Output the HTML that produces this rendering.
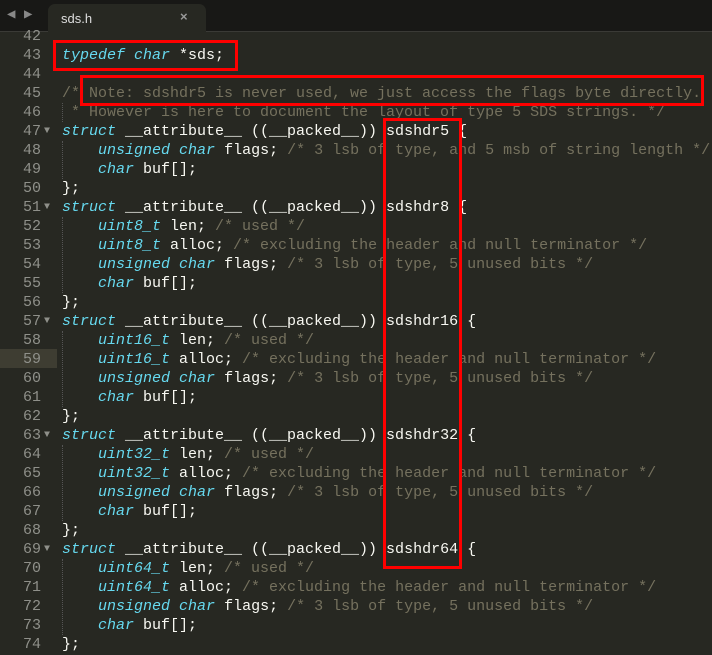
<!DOCTYPE html>
<html><head><meta charset="utf-8"><style>
body{margin:0;width:712px;height:655px;overflow:hidden;background:#272822;font-family:"Liberation Mono",monospace;}
#tabbar{position:absolute;left:0;top:0;width:712px;height:31px;background:#181816;border-bottom:1px solid #3a3a36;}
#tab{position:absolute;left:48px;top:4px;width:158px;height:28px;background:#272822;border-radius:7px 7px 0 0;}
#tab span{position:absolute;left:13px;top:7px;color:#ddd;font:13px "Liberation Sans",sans-serif;}
#tab b{position:absolute;left:132px;top:5px;color:#999;font:bold 13px "Liberation Sans",sans-serif;}
.nav{position:absolute;top:6px;color:#888;font-size:14px;}
.l{position:absolute;left:0;height:19px;line-height:19px;font-size:15px;white-space:pre;color:#f8f8f2;margin-top:1px;}
.n{position:absolute;left:0;width:41px;text-align:right;color:#8f908a;}
.c{position:absolute;left:62px;}
.k{color:#66d9ef;font-style:italic}
.m{color:#75715e}
.f{position:absolute;left:44px;top:0;color:#8f908a;font-size:10px;}
.box{position:absolute;border:3px solid #ff0000;box-sizing:border-box;}
.g{position:absolute;left:62px;width:0;border-left:1px dotted #555;}
</style></head><body>
<div id="tabbar"><span class="nav" style="left:7px">◀</span><span class="nav" style="left:24px">▶</span><div id="tab"><span>sds.h</span><b>×</b></div></div>
<div style="position:absolute;left:0;top:349px;width:57px;height:19px;background:#3e3d32"></div>
<div class="g" style="top:103px;height:19px"></div>
<div class="g" style="top:141px;height:38px"></div>
<div class="g" style="top:217px;height:76px"></div>
<div class="g" style="top:331px;height:76px"></div>
<div class="g" style="top:445px;height:76px"></div>
<div class="g" style="top:559px;height:76px"></div>
<div id="code">
<div class="l" style="top:26px"><span class="n">42</span></div>
<div class="l" style="top:45px"><span class="n">43</span><span class="c"><span class="k">typedef</span> <span class="k">char</span> *sds;</span></div>
<div class="l" style="top:64px"><span class="n">44</span></div>
<div class="l" style="top:83px"><span class="n">45</span><span class="c m">/* Note: sdshdr5 is never used, we just access the flags byte directly.</span></div>
<div class="l" style="top:102px"><span class="n">46</span><span class="c m"> * However is here to document the layout of type 5 SDS strings. */</span></div>
<div class="l" style="top:121px"><span class="n">47</span><span class="f">▼</span><span class="c"><span class="k">struct</span> __attribute__ ((__packed__)) sdshdr5 {</span></div>
<div class="l" style="top:140px"><span class="n">48</span><span class="c">    <span class="k">unsigned</span> <span class="k">char</span> flags; <span class="m">/* 3 lsb of type, and 5 msb of string length */</span></span></div>
<div class="l" style="top:159px"><span class="n">49</span><span class="c">    <span class="k">char</span> buf[];</span></div>
<div class="l" style="top:178px"><span class="n">50</span><span class="c">};</span></div>
<div class="l" style="top:197px"><span class="n">51</span><span class="f">▼</span><span class="c"><span class="k">struct</span> __attribute__ ((__packed__)) sdshdr8 {</span></div>
<div class="l" style="top:216px"><span class="n">52</span><span class="c">    <span class="k">uint8_t</span> len; <span class="m">/* used */</span></span></div>
<div class="l" style="top:235px"><span class="n">53</span><span class="c">    <span class="k">uint8_t</span> alloc; <span class="m">/* excluding the header and null terminator */</span></span></div>
<div class="l" style="top:254px"><span class="n">54</span><span class="c">    <span class="k">unsigned</span> <span class="k">char</span> flags; <span class="m">/* 3 lsb of type, 5 unused bits */</span></span></div>
<div class="l" style="top:273px"><span class="n">55</span><span class="c">    <span class="k">char</span> buf[];</span></div>
<div class="l" style="top:292px"><span class="n">56</span><span class="c">};</span></div>
<div class="l" style="top:311px"><span class="n">57</span><span class="f">▼</span><span class="c"><span class="k">struct</span> __attribute__ ((__packed__)) sdshdr16 {</span></div>
<div class="l" style="top:330px"><span class="n">58</span><span class="c">    <span class="k">uint16_t</span> len; <span class="m">/* used */</span></span></div>
<div class="l" style="top:349px"><span class="n">59</span><span class="c">    <span class="k">uint16_t</span> alloc; <span class="m">/* excluding the header and null terminator */</span></span></div>
<div class="l" style="top:368px"><span class="n">60</span><span class="c">    <span class="k">unsigned</span> <span class="k">char</span> flags; <span class="m">/* 3 lsb of type, 5 unused bits */</span></span></div>
<div class="l" style="top:387px"><span class="n">61</span><span class="c">    <span class="k">char</span> buf[];</span></div>
<div class="l" style="top:406px"><span class="n">62</span><span class="c">};</span></div>
<div class="l" style="top:425px"><span class="n">63</span><span class="f">▼</span><span class="c"><span class="k">struct</span> __attribute__ ((__packed__)) sdshdr32 {</span></div>
<div class="l" style="top:444px"><span class="n">64</span><span class="c">    <span class="k">uint32_t</span> len; <span class="m">/* used */</span></span></div>
<div class="l" style="top:463px"><span class="n">65</span><span class="c">    <span class="k">uint32_t</span> alloc; <span class="m">/* excluding the header and null terminator */</span></span></div>
<div class="l" style="top:482px"><span class="n">66</span><span class="c">    <span class="k">unsigned</span> <span class="k">char</span> flags; <span class="m">/* 3 lsb of type, 5 unused bits */</span></span></div>
<div class="l" style="top:501px"><span class="n">67</span><span class="c">    <span class="k">char</span> buf[];</span></div>
<div class="l" style="top:520px"><span class="n">68</span><span class="c">};</span></div>
<div class="l" style="top:539px"><span class="n">69</span><span class="f">▼</span><span class="c"><span class="k">struct</span> __attribute__ ((__packed__)) sdshdr64 {</span></div>
<div class="l" style="top:558px"><span class="n">70</span><span class="c">    <span class="k">uint64_t</span> len; <span class="m">/* used */</span></span></div>
<div class="l" style="top:577px"><span class="n">71</span><span class="c">    <span class="k">uint64_t</span> alloc; <span class="m">/* excluding the header and null terminator */</span></span></div>
<div class="l" style="top:596px"><span class="n">72</span><span class="c">    <span class="k">unsigned</span> <span class="k">char</span> flags; <span class="m">/* 3 lsb of type, 5 unused bits */</span></span></div>
<div class="l" style="top:615px"><span class="n">73</span><span class="c">    <span class="k">char</span> buf[];</span></div>
<div class="l" style="top:634px"><span class="n">74</span><span class="c">};</span></div>
</div>
<div class="box" style="left:53px;top:40px;width:185px;height:31px"></div>
<div class="box" style="left:80px;top:75px;width:624px;height:31px"></div>
<div class="box" style="left:383px;top:118px;width:79px;height:451px"></div>
</body></html>
